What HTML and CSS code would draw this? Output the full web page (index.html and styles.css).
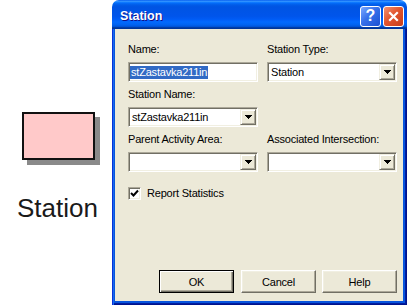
FILE: index.html
```html
<!DOCTYPE html>
<html lang="en">
<head>
    <meta charset="UTF-8">
    <title>Station</title>
    <link rel="stylesheet" href="styles.css">
</head>
<body>
    <div class="screen">
        <div class="node">
            <div class="node-box"></div>
            <div class="node-label">Station</div>
        </div>

        <div class="dialog">
            <div class="titlebar">
                <span class="title">Station</span>
                <div class="title-buttons">
                    <div class="tbtn tbtn-help">?</div>
                    <div class="tbtn tbtn-close">
                        <svg width="13" height="13" viewBox="0 0 13 13">
                            <path d="M3 3L10 10M10 3L3 10" stroke="#fff" stroke-width="2.2" stroke-linecap="square"></path>
                        </svg>
                    </div>
                </div>
            </div>
            <div class="frame">
                <div class="dialog-body">
                    <div class="form-grid">
                        <div class="field">
                            <label>Name:</label>
                            <div class="edit"><span class="sel">stZastavka211in</span></div>
                        </div>
                        <div class="field">
                            <label>Station Type:</label>
                            <div class="combo">
                                <span class="combo-text">Station</span>
                                <span class="combo-btn"><svg width="7" height="4" shape-rendering="crispEdges"><path d="M0 0h7v1H0zM1 1h5v1H1zM2 2h3v1H2zM3 3h1v1H3z"></path></svg></span>
                            </div>
                        </div>
                        <div class="field">
                            <label>Station Name:</label>
                            <div class="combo">
                                <span class="combo-text">stZastavka211in</span>
                                <span class="combo-btn"><svg width="7" height="4" shape-rendering="crispEdges"><path d="M0 0h7v1H0zM1 1h5v1H1zM2 2h3v1H2zM3 3h1v1H3z"></path></svg></span>
                            </div>
                        </div>
                        <div></div>
                        <div class="field">
                            <label>Parent Activity Area:</label>
                            <div class="combo">
                                <span class="combo-text"></span>
                                <span class="combo-btn"><svg width="7" height="4" shape-rendering="crispEdges"><path d="M0 0h7v1H0zM1 1h5v1H1zM2 2h3v1H2zM3 3h1v1H3z"></path></svg></span>
                            </div>
                        </div>
                        <div class="field">
                            <label>Associated Intersection:</label>
                            <div class="combo">
                                <span class="combo-text"></span>
                                <span class="combo-btn"><svg width="7" height="4" shape-rendering="crispEdges"><path d="M0 0h7v1H0zM1 1h5v1H1zM2 2h3v1H2zM3 3h1v1H3z"></path></svg></span>
                            </div>
                        </div>
                    </div>

                    <div class="check-row">
                        <span class="checkbox">
                            <svg width="9" height="9" viewBox="0 0 9 9">
                                <path d="M1 4L3.5 6.5L8 1.5" fill="none" stroke="#000" stroke-width="2"></path>
                            </svg>
                        </span>
                        <span>Report Statistics</span>
                    </div>

                    <div class="buttons">
                        <div class="btn btn-default">OK</div>
                        <div class="btn">Cancel</div>
                        <div class="btn">Help</div>
                    </div>
                </div>
            </div>
        </div>
    </div>
</body>
</html>
```

FILE: styles.css
```css
body {
    margin: 0;
    background: #fff;
    font-family: "Liberation Sans", Arial, sans-serif;
}
.screen {
    display: flex;
    width: 410px;
    height: 305px;
    overflow: hidden;
}

/* diagram node on the left */
.node {
    width: 112px;
    flex: none;
    padding-top: 112px;
    box-sizing: border-box;
}
.node-box {
    margin-left: 22px;
    width: 73px;
    height: 48px;
    box-sizing: border-box;
    border: 2px solid #111;
    background: #ffc9c9;
    box-shadow: 5px 5px 0 #8a8a8a;
}
.node-label {
    margin-top: 32px;
    padding-left: 17px;
    font-size: 26px;
    line-height: 32px;
    color: #1a1a1a;
}

/* dialog window */
.dialog {
    width: 295px;
    flex: none;
    height: 305px;
    display: flex;
    flex-direction: column;
}
.titlebar {
    height: 29px;
    flex: none;
    box-sizing: border-box;
    display: flex;
    align-items: center;
    padding: 3px 3px 0 8px;
    border-radius: 7px 7px 0 0;
    background: linear-gradient(to bottom, #0058ee 0%, #3593ff 4%, #288eff 6%, #127dff 8%, #036ffc 10%, #0262ee 14%, #0057e5 20%, #0054e3 24%, #0055eb 56%, #005bf5 66%, #026afe 76%, #0062ef 86%, #0052d6 92%, #0040ab 94%, #003092 100%);
}
.title {
    flex: 1;
    color: #fff;
    font-weight: bold;
    font-size: 12.5px;
    text-shadow: 1px 1px #0f1089;
}
.title-buttons {
    display: flex;
    gap: 2px;
}
.tbtn {
    width: 21px;
    height: 21px;
    box-sizing: border-box;
    border: 1px solid #fff;
    border-radius: 3px;
    display: flex;
    align-items: center;
    justify-content: center;
}
.tbtn-help {
    background: linear-gradient(135deg, #7aa8ff, #3670ea 45%, #1c50d2);
    color: #fff;
    font-weight: bold;
    font-size: 16px;
    line-height: 1;
}
.tbtn-close {
    background: linear-gradient(135deg, #f29272, #e2552f 45%, #c63f1c);
}
.frame {
    flex: 1;
    display: flex;
    background: #0855dd;
    padding: 0 4px 4px 3px;
    box-shadow: inset 1px 0 #0831d9, inset 2px 0 #166aee, inset -1px -1px #00138c, inset -2px -2px #001ea0;
}
.dialog-body {
    flex: 1;
    display: flex;
    flex-direction: column;
    padding: 14px 6px 8px 13px;
    background: #ece9d8;
    font-size: 11px;
    letter-spacing: -0.2px;
    color: #000;
}

/* form */
.form-grid {
    display: grid;
    grid-template-columns: 130px 130px;
    column-gap: 9px;
    row-gap: 6px;
}
.field label {
    display: block;
    line-height: 13px;
    margin-bottom: 6px;
}
.edit,
.combo {
    height: 20px;
    box-sizing: border-box;
    border: 1px solid;
    border-color: #aca899 #fff #fff #aca899;
    box-shadow: inset 1px 1px #716f64, inset -1px -1px #f1efe2;
    background: #fff;
    display: flex;
    align-items: center;
}
.edit {
    padding: 0 1px;
}
.sel {
    background: #316ac5;
    color: #fff;
    line-height: 13px;
    padding: 0 1px;
}
.combo {
    padding: 1px;
}
.combo-text {
    flex: 1;
    padding-left: 2px;
}
.combo-btn {
    width: 16px;
    height: 16px;
    box-sizing: border-box;
    border: 1px solid;
    border-color: #f1efe2 #716f64 #716f64 #f1efe2;
    box-shadow: inset 1px 1px #fff, inset -1px -1px #aca899;
    background: #ece9d8;
    display: flex;
    align-items: center;
    justify-content: center;
}
.check-row {
    margin-top: 15px;
    display: flex;
    align-items: center;
    gap: 6px;
    line-height: 13px;
}
.checkbox {
    width: 13px;
    height: 13px;
    box-sizing: border-box;
    border: 1px solid;
    border-color: #aca899 #fff #fff #aca899;
    box-shadow: inset 1px 1px #716f64, inset -1px -1px #f1efe2;
    background: #fff;
    display: flex;
    align-items: center;
    justify-content: center;
}

/* bottom buttons */
.buttons {
    margin-top: auto;
    display: flex;
    justify-content: flex-end;
    gap: 6px;
}
.btn {
    width: 75px;
    height: 23px;
    box-sizing: border-box;
    border: 1px solid;
    border-color: #fff #716f64 #716f64 #fff;
    box-shadow: inset -1px -1px #aca899, inset 1px 1px #f1efe2;
    background: #ece9d8;
    display: flex;
    align-items: center;
    justify-content: center;
}
.btn-default {
    margin-right: 1px;
    border-color: #000;
    box-shadow: inset 1px 1px #fff, inset -1px -1px #716f64, inset -2px -2px #aca899;
}
```
